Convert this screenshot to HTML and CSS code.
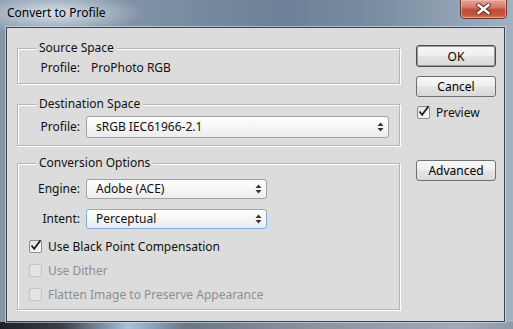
FILE: index.html
```html
<!DOCTYPE html>
<html lang="en">
<head>
    <meta charset="UTF-8">
    <title>Convert to Profile</title>
    <link rel="stylesheet" href="styles.css">
</head>
<body>

<div class="window">
    <div class="titlebar">
        <span class="title">Convert to Profile</span>
        <div class="close">
            <svg width="15" height="12" viewBox="0 0 15 12">
                <path d="M2.5 2 L12.5 10 M12.5 2 L2.5 10" stroke="#5a2a22" stroke-width="4.2" stroke-linecap="square"/>
                <path d="M2.5 2 L12.5 10 M12.5 2 L2.5 10" stroke="#fff" stroke-width="2.4" stroke-linecap="square"/>
            </svg>
        </div>
    </div>

    <div class="client">
        <div class="groups">
            <fieldset class="group source">
                <legend>Source Space</legend>
                <div class="row">
                    <span class="label">Profile:</span>
                    <span class="value">ProPhoto RGB</span>
                </div>
            </fieldset>

            <fieldset class="group destination">
                <legend>Destination Space</legend>
                <div class="row">
                    <span class="label">Profile:</span>
                    <div class="select wide">
                        <span>sRGB IEC61966-2.1</span>
                        <svg class="arrows" width="7" height="10" viewBox="0 0 7 10"><path d="M3.5 0.5 L6.5 4 L0.5 4 Z M0.5 6 L6.5 6 L3.5 9.5 Z" fill="#333"/></svg>
                    </div>
                </div>
            </fieldset>

            <fieldset class="group conversion">
                <legend>Conversion Options</legend>
                <div class="row engine">
                    <span class="label">Engine:</span>
                    <div class="select short">
                        <span>Adobe (ACE)</span>
                        <svg class="arrows" width="7" height="10" viewBox="0 0 7 10"><path d="M3.5 0.5 L6.5 4 L0.5 4 Z M0.5 6 L6.5 6 L3.5 9.5 Z" fill="#333"/></svg>
                    </div>
                </div>
                <div class="row intent">
                    <span class="label">Intent:</span>
                    <div class="select short focused">
                        <span>Perceptual</span>
                        <svg class="arrows" width="7" height="10" viewBox="0 0 7 10"><path d="M3.5 0.5 L6.5 4 L0.5 4 Z M0.5 6 L6.5 6 L3.5 9.5 Z" fill="#333"/></svg>
                    </div>
                </div>
                <div class="option">
                    <span class="check checked">
                        <svg width="13" height="13" viewBox="0 0 13 13"><path d="M2.5 6.5 L5.2 9.8 L11.5 1.2" fill="none" stroke="#1a1a1a" stroke-width="1.7"/></svg>
                    </span>
                    <span>Use Black Point Compensation</span>
                </div>
                <div class="option disabled">
                    <span class="check"></span>
                    <span>Use Dither</span>
                </div>
                <div class="option disabled">
                    <span class="check"></span>
                    <span>Flatten Image to Preserve Appearance</span>
                </div>
            </fieldset>
        </div>

        <div class="actions">
            <button class="btn default">OK</button>
            <button class="btn cancel">Cancel</button>
            <div class="option preview">
                <span class="check checked">
                    <svg width="13" height="13" viewBox="0 0 13 13"><path d="M2.5 6.5 L5.2 9.8 L11.5 1.2" fill="none" stroke="#1a1a1a" stroke-width="1.7"/></svg>
                </span>
                <span>Preview</span>
            </div>
            <button class="btn advanced">Advanced</button>
        </div>
    </div>
</div>

</body>
</html>
```

FILE: styles.css
```css
body {
    margin: 0;
    font-family: "Noto Sans", "Open Sans", sans-serif;
    font-size: 12px;
    color: #111;
}
.window {
    width: 513px;
    height: 329px;
    display: flex;
    flex-direction: column;
    background:
        linear-gradient(90deg, #1c2026 0%, #3a3f47 12%, #a8c2dc 25%, #6b7786 36%, #8a93a0 60%, #a0aab8 90%, #8e98a6 100%) bottom / 100% 7px no-repeat,
        radial-gradient(ellipse 90px 22px at 55px 13px, rgba(225, 233, 241, 0.9), rgba(225, 233, 241, 0)),
        linear-gradient(90deg, #8596a8 0%, #7d90a4 30%, #6c8197 55%, #7b8fa3 75%, #a2b1c1 100%);
}
.titlebar {
    height: 27px;
    display: flex;
    justify-content: space-between;
    align-items: flex-start;
    padding: 0 6px 0 7px;
    box-sizing: border-box;
}
.title {
    margin-top: 5px;
    line-height: 16px;
    color: #000;
}
.close {
    width: 47px;
    height: 19px;
    box-sizing: border-box;
    border: 1px solid #6b3a33;
    border-top: none;
    border-radius: 0 0 5px 5px;
    background: linear-gradient(#e7a396 0%, #d47b6c 40%, #c04a36 55%, #c8583f 85%, #dc7a5c 100%);
    box-shadow: inset 0 0 0 1px rgba(255, 210, 200, 0.45);
    display: flex;
    align-items: center;
    justify-content: center;
}
.client {
    flex: 1;
    margin: 0 8px 7px 6px;
    border: 1px solid #3a4450;
    box-shadow: 0 0 0 1px rgba(228, 235, 242, 0.55);
    background: #dcdcdc;
    display: flex;
}
.groups {
    width: 383px;
    margin-left: 10px;
    padding-top: 12px;
}
.group {
    margin: 0;
    padding: 0 0 7px;
    min-width: 0;
    border: 1px solid #b6b6b6;
    box-shadow: inset 1px 1px 0 #fff, 1px 1px 0 #fff;
}
.group legend {
    margin-left: 18px;
    padding: 0 3px;
    line-height: 16px;
    background: #dcdcdc;
}
.destination {
    margin-top: 12px;
}
.conversion {
    margin-top: 9px;
    padding-bottom: 8px;
}
.row {
    display: flex;
    align-items: center;
    margin-top: 4px;
    line-height: 16px;
}
.label {
    width: 62px;
    text-align: right;
    margin-right: 6px;
}
.value {
    margin-left: 5px;
}
.engine {
    margin-top: 8px;
}
.intent {
    margin-top: 10px;
}
.select {
    height: 22px;
    box-sizing: border-box;
    border: 1px solid #a2a2a2;
    border-radius: 3px;
    background: linear-gradient(#ffffff, #ececec);
    display: flex;
    align-items: center;
    justify-content: space-between;
    padding: 0 4px 0 9px;
}
.select.wide {
    width: 303px;
}
.select.short {
    width: 181px;
    height: 20px;
}
.select.focused {
    border-color: #7eaee2;
}
.option {
    display: flex;
    align-items: center;
    height: 14px;
    margin-top: 10px;
    padding-left: 11px;
}
.check {
    width: 13px;
    height: 13px;
    box-sizing: border-box;
    border: 1px solid #8c8c8c;
    border-radius: 2px;
    background: linear-gradient(135deg, #e2e2e2, #fbfbfb);
    margin-right: 6px;
    position: relative;
}
.check svg {
    position: absolute;
    left: -1px;
    top: -2px;
    overflow: visible;
}
.option.disabled {
    color: #8e8e8e;
}
.option.disabled .check {
    border-color: #c3c3c3;
    background: #e4e4e4;
}
.actions {
    width: 80px;
    margin-left: 16px;
    padding-top: 17px;
    display: flex;
    flex-direction: column;
}
.btn {
    height: 21px;
    padding: 0;
    font: inherit;
    color: #000;
    border: 1px solid #707070;
    border-radius: 3px;
    background: linear-gradient(#f7f7f7 0%, #efefef 48%, #e3e3e3 52%, #d9d9d9 100%);
}
.btn.default {
    height: 22px;
    border-color: #4c4c4c;
    box-shadow: inset 0 0 0 1px #9a9a9a;
}
.btn.cancel {
    margin-top: 9px;
}
.option.preview {
    margin-top: 8px;
    padding-left: 1px;
}
.btn.advanced {
    margin-top: 41px;
}
```
